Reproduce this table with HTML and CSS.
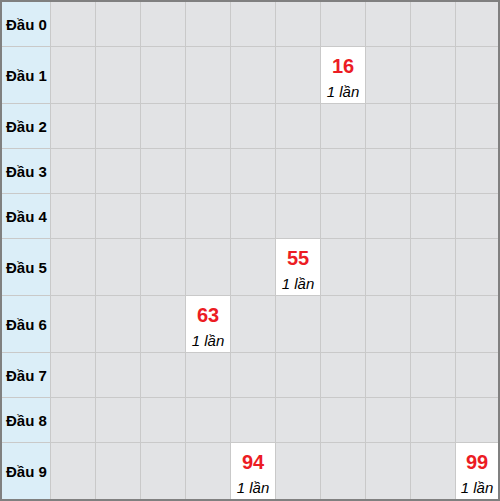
FILE: index.html
```html
<!DOCTYPE html>
<html>
<head>
<meta charset="utf-8">
<link rel="stylesheet" href="styles.css">
</head>
<body>
<div class="board">
  <div class="head">Đầu 0</div>
  <div class="c"></div><div class="c"></div><div class="c"></div><div class="c"></div><div class="c"></div><div class="c"></div><div class="c"></div><div class="c"></div><div class="c"></div><div class="c"></div>

  <div class="head">Đầu 1</div>
  <div class="c"></div><div class="c"></div><div class="c"></div><div class="c"></div><div class="c"></div><div class="c"></div><div class="c hit"><span class="num">16</span><span class="cnt">1 lần</span></div><div class="c"></div><div class="c"></div><div class="c"></div>

  <div class="head">Đầu 2</div>
  <div class="c"></div><div class="c"></div><div class="c"></div><div class="c"></div><div class="c"></div><div class="c"></div><div class="c"></div><div class="c"></div><div class="c"></div><div class="c"></div>

  <div class="head">Đầu 3</div>
  <div class="c"></div><div class="c"></div><div class="c"></div><div class="c"></div><div class="c"></div><div class="c"></div><div class="c"></div><div class="c"></div><div class="c"></div><div class="c"></div>

  <div class="head">Đầu 4</div>
  <div class="c"></div><div class="c"></div><div class="c"></div><div class="c"></div><div class="c"></div><div class="c"></div><div class="c"></div><div class="c"></div><div class="c"></div><div class="c"></div>

  <div class="head">Đầu 5</div>
  <div class="c"></div><div class="c"></div><div class="c"></div><div class="c"></div><div class="c"></div><div class="c hit"><span class="num">55</span><span class="cnt">1 lần</span></div><div class="c"></div><div class="c"></div><div class="c"></div><div class="c"></div>

  <div class="head">Đầu 6</div>
  <div class="c"></div><div class="c"></div><div class="c"></div><div class="c hit"><span class="num">63</span><span class="cnt">1 lần</span></div><div class="c"></div><div class="c"></div><div class="c"></div><div class="c"></div><div class="c"></div><div class="c"></div>

  <div class="head">Đầu 7</div>
  <div class="c"></div><div class="c"></div><div class="c"></div><div class="c"></div><div class="c"></div><div class="c"></div><div class="c"></div><div class="c"></div><div class="c"></div><div class="c"></div>

  <div class="head">Đầu 8</div>
  <div class="c"></div><div class="c"></div><div class="c"></div><div class="c"></div><div class="c"></div><div class="c"></div><div class="c"></div><div class="c"></div><div class="c"></div><div class="c"></div>

  <div class="head">Đầu 9</div>
  <div class="c"></div><div class="c"></div><div class="c"></div><div class="c"></div><div class="c hit"><span class="num">94</span><span class="cnt">1 lần</span></div><div class="c"></div><div class="c"></div><div class="c"></div><div class="c"></div><div class="c hit"><span class="num">99</span><span class="cnt">1 lần</span></div>
</div>
</body>
</html>
```
FILE: styles.css
```css
html, body {
  margin: 0;
  padding: 0;
  background: #ffffff;
}

.board {
  box-sizing: border-box;
  width: 500px;
  height: 501px;
  border: 2px solid #808080;
  background: #c9c9c9;
  display: grid;
  grid-template-columns: 48px repeat(9, 44px) 1fr;
  grid-template-rows: 44px 56px 44px 44px 44px 56px 56px 44px 44px 56px;
  gap: 1px;
  font-family: "Liberation Sans", Arial, sans-serif;
}

.head {
  background: #dbeef8;
  color: #000;
  font-weight: bold;
  font-size: 15px;
  display: flex;
  align-items: center;
  padding-left: 4px;
  white-space: nowrap;
}

.c {
  background: #e2e3e5;
}

.c.hit {
  background: #ffffff;
  display: flex;
  flex-direction: column;
  align-items: center;
  padding-top: 7px;
  box-sizing: border-box;
}

.num {
  color: #ec1c24;
  font-weight: bold;
  font-size: 20px;
  line-height: 24px;
}

.cnt {
  color: #000;
  font-style: italic;
  font-size: 15px;
  line-height: 20px;
  margin-top: 4px;
  white-space: nowrap;
}
```
